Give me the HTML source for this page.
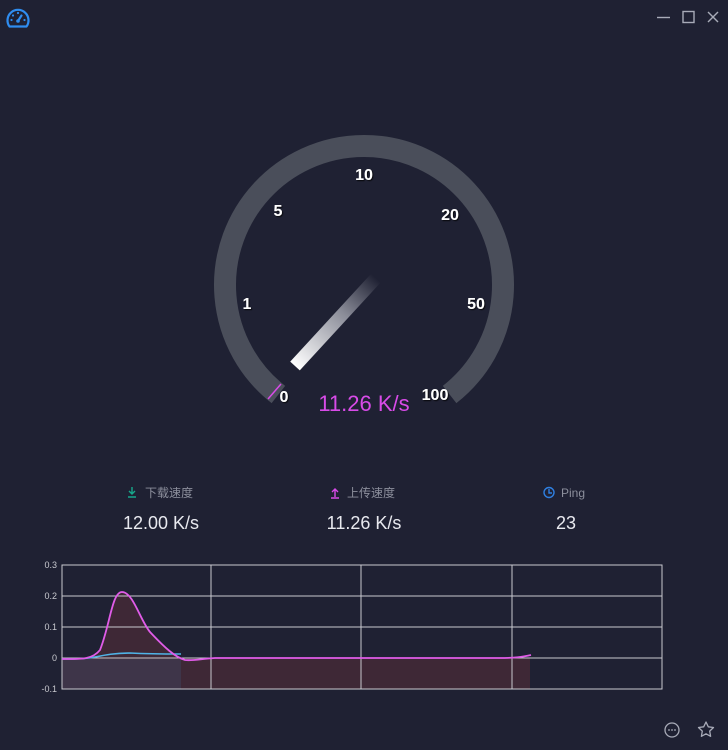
<!DOCTYPE html>
<html><head><meta charset="utf-8"><style>
html,body{margin:0;padding:0;background:#1f2133;width:728px;height:750px;overflow:hidden;font-family:"Liberation Sans","Noto Sans CJK SC",sans-serif;}
svg{position:absolute;left:0;top:0}
</style></head><body>
<svg width="728" height="750" viewBox="0 0 728 750">
<defs>
<linearGradient id="nd" x1="295" y1="366" x2="376" y2="278" gradientUnits="userSpaceOnUse">
<stop offset="0" stop-color="#ffffff"/><stop offset="0.6" stop-color="#8a8c98"/><stop offset="1" stop-color="#1f2133"/></linearGradient>
<filter id="sh"><feDropShadow dx="1" dy="1" stdDeviation="0.6" flood-color="#000" flood-opacity="0.8"/></filter>
</defs>
<!-- logo -->
<g fill="none" stroke="#2f8df0" stroke-width="2.2" stroke-linecap="round" stroke-linejoin="round">
<path d="M9.5 26.5 A10.5 10.5 0 1 1 26.5 26.5 Z"/>
<line x1="18" y1="21" x2="21.5" y2="15.5"/>
</g>
<g fill="#2f8df0"><circle cx="11.5" cy="20" r="1.1"/><circle cx="13" cy="15.5" r="1.1"/><circle cx="18" cy="13" r="1.1"/><circle cx="24.5" cy="20" r="1.1"/><circle cx="18" cy="21" r="1.8"/></g>
<!-- window controls -->
<g stroke="#a8abb8" stroke-width="1.4" fill="none">
<line x1="657" y1="17.5" x2="670" y2="17.5"/>
<rect x="683" y="11.5" width="11" height="11"/>
<line x1="708" y1="12" x2="718" y2="22"/><line x1="718" y1="12" x2="708" y2="22"/>
</g>
<!-- gauge -->
<path d="M278.4 394.5 A139 139 0 1 1 449.6 394.5" fill="none" stroke="#4a4e5a" stroke-width="22"/>
<line x1="268" y1="399" x2="281" y2="384" stroke="#d84be8" stroke-width="1.5"/>
<line x1="295" y1="366" x2="376" y2="278" stroke="url(#nd)" stroke-width="13"/>
<g fill="#fff" font-size="16" font-weight="bold" filter="url(#sh)" text-anchor="middle">
<text x="364" y="180">10</text>
<text x="278" y="216">5</text>
<text x="450" y="220">20</text>
<text x="247" y="309">1</text>
<text x="476" y="309">50</text>
<text x="284" y="402">0</text>
<text x="435" y="400">100</text>
</g>
<text x="364" y="411" fill="#d84be8" font-size="22" text-anchor="middle">11.26 K/s</text>
<!-- stats -->
<g font-size="12" fill="#8c8f9c">
<text x="145" y="497">下载速度</text>
<text x="347" y="497">上传速度</text>
<text x="561" y="497">Ping</text>
</g>
<g stroke-width="1.4" fill="none">
<path d="M132 487 v7 M129 491 l3 3 3-3 M128 497 h8" stroke="#17a88c"/>
<path d="M335 497 v-8 M332 492 l3-3 3 3 M331 498 h8" stroke="#d84be8"/>
<circle cx="549" cy="492.5" r="5" stroke="#2f7fe0"/><path d="M549 489 v4 h3" stroke="#2f7fe0"/>
</g>
<g font-size="18" fill="#e8e9ef" text-anchor="middle">
<text x="161" y="529">12.00 K/s</text>
<text x="364" y="529">11.26 K/s</text>
<text x="566" y="529">23</text>
</g>
<!-- chart -->
<rect x="62" y="658" width="119" height="31" fill="#3e3549"/>
<rect x="181" y="658" width="349" height="31" fill="#3e2836"/>
<path d="M62 659 C80 659 92 660 100 650 C110 625 112 592 122 592 C133 592 140 620 150 632 C165 648 175 655 181 659 Z" fill="#3e2836"/>
<g stroke="#c8c9cf" stroke-width="1" fill="none">
<rect x="62" y="565" width="600" height="124"/>
<line x1="62" y1="596" x2="662" y2="596"/><line x1="62" y1="627" x2="662" y2="627"/><line x1="62" y1="658" x2="662" y2="658"/>
<line x1="211" y1="565" x2="211" y2="689"/><line x1="361" y1="565" x2="361" y2="689"/><line x1="512" y1="565" x2="512" y2="689"/>
</g>
<path d="M62 659 C75 659 85 659 95 657 C105 655 115 653 130 653 C150 654 165 654 181 654" stroke="#4fb3e6" stroke-width="1.6" fill="none"/>
<path d="M62 659 C80 659 92 660 100 650 C110 625 112 592 122 592 C133 592 140 620 150 632 C165 648 175 657 185 660 C192 661 200 659 215 658 L500 658 C515 658 522 657 531 655" stroke="#e05ce8" stroke-width="1.8" fill="none"/>
<g fill="#c8c9cf" font-size="9" text-anchor="end">
<text x="57" y="568">0.3</text><text x="57" y="599">0.2</text><text x="57" y="630">0.1</text><text x="57" y="661">0</text><text x="57" y="692">-0.1</text>
</g>
<!-- bottom icons -->
<g stroke="#a8abb8" stroke-width="1.3" fill="none">
<circle cx="672" cy="730" r="7"/>
<path d="M706 722 l2.3 4.8 5.2 .7 -3.8 3.6 .9 5.2 -4.6 -2.5 -4.6 2.5 .9 -5.2 -3.8 -3.6 5.2 -.7 Z" stroke-linejoin="round"/>
</g>
<g fill="#a8abb8"><circle cx="669" cy="730" r="0.9"/><circle cx="672" cy="730" r="0.9"/><circle cx="675" cy="730" r="0.9"/></g>
</svg>
</body></html>
